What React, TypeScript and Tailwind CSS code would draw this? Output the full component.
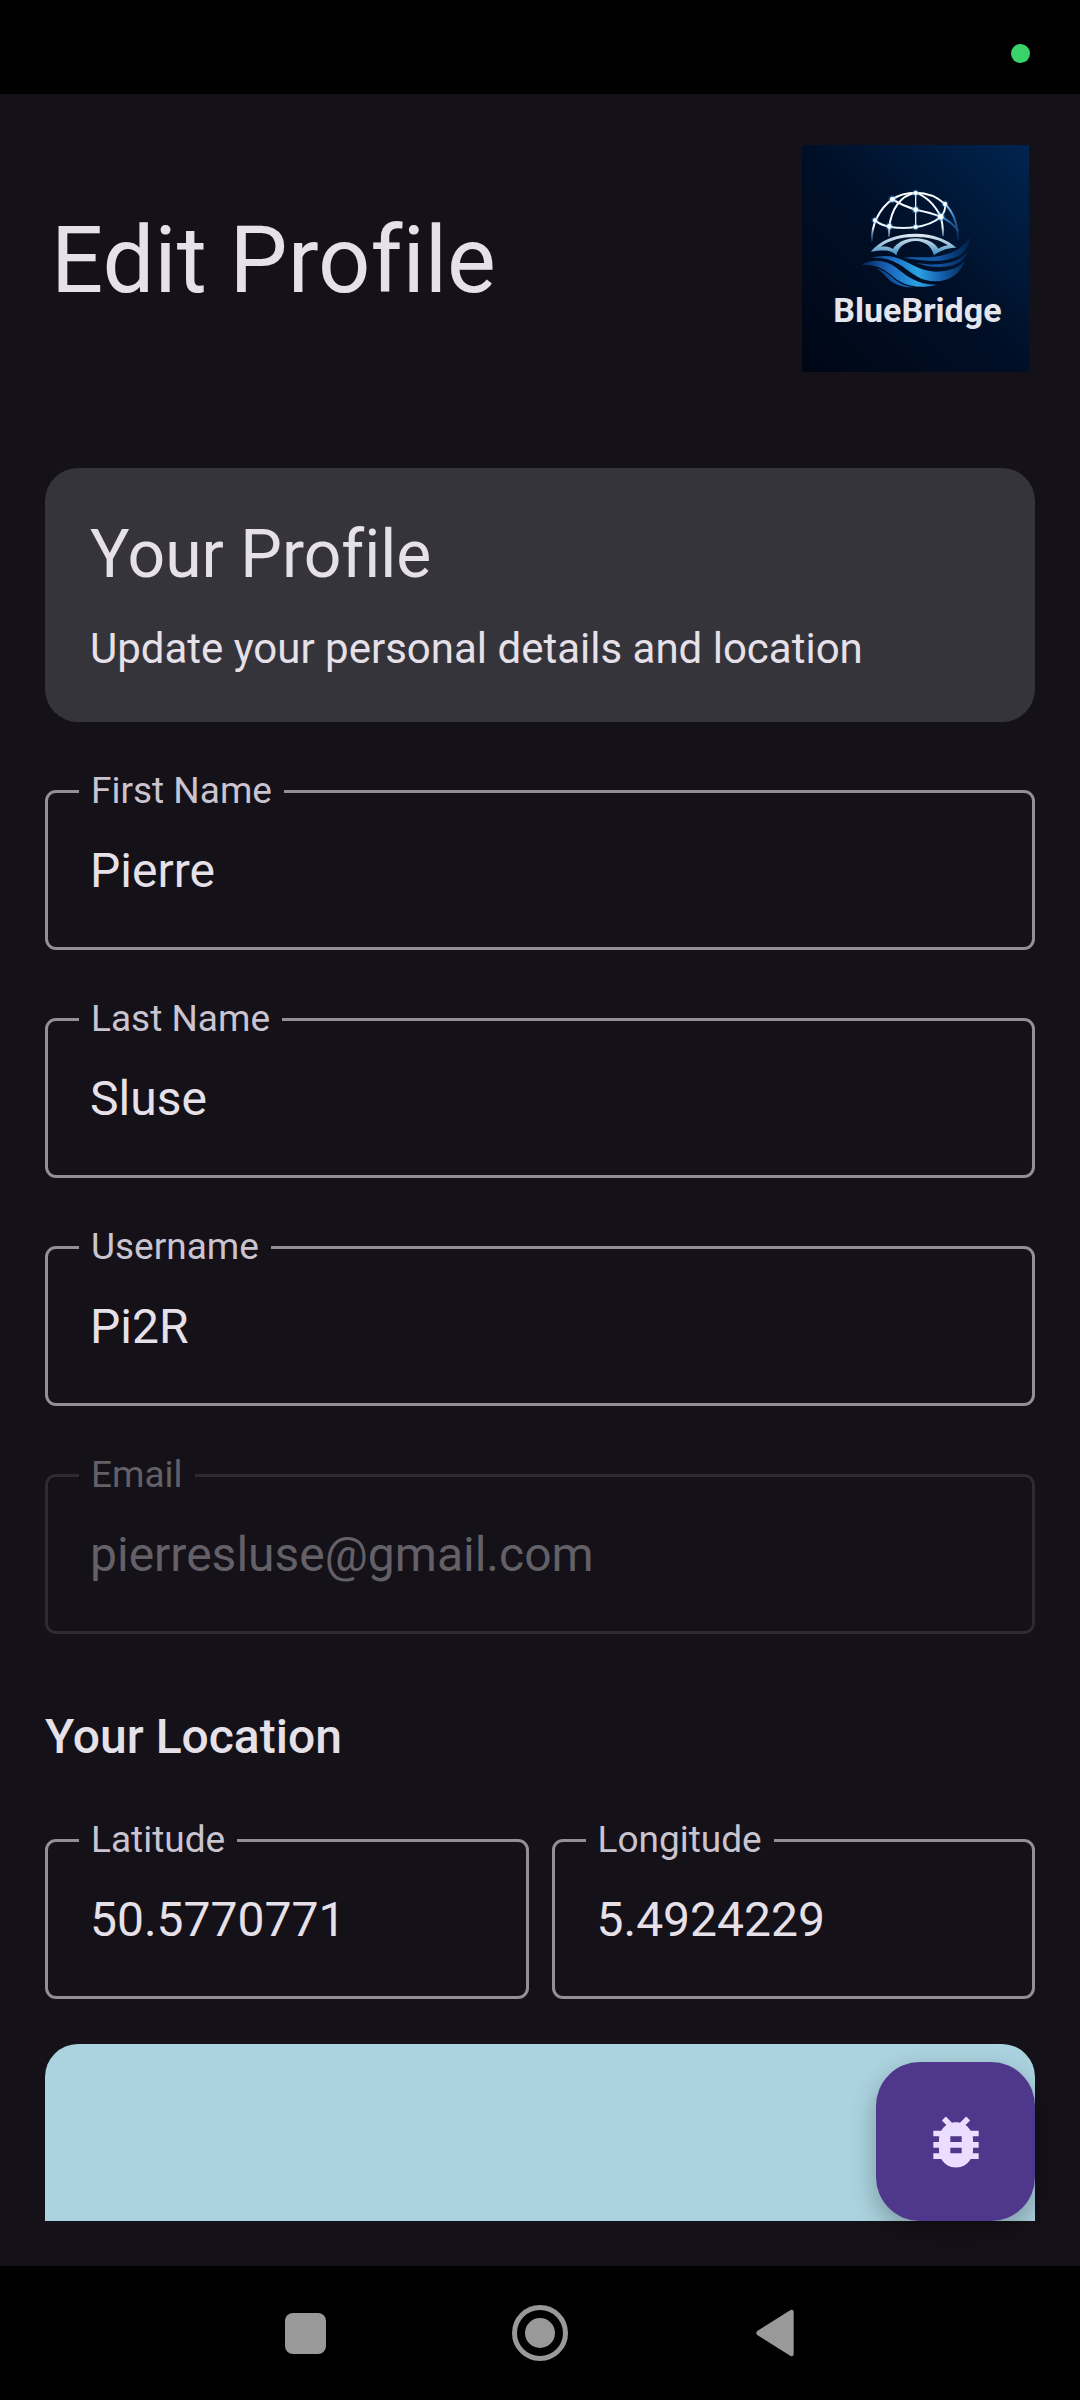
import { MdBugReport } from "react-icons/md";

type FieldProps = {
  id: string;
  label: string;
  value: string;
  type?: string;
  disabled?: boolean;
};

function Field({ id, label, value, type = "text", disabled = false }: FieldProps) {
  return (
    <div
      className={
        disabled
          ? "relative min-w-0 rounded-[11px] border-[3px] border-[#2d2b31] text-[#636067]"
          : "relative min-w-0 rounded-[11px] border-[3px] border-[#938f96] text-[#e6e0e9]"
      }
    >
      <label
        htmlFor={id}
        className={
          disabled
            ? "absolute -top-6 left-[31px] bg-[#141118] px-3 text-[37px] leading-[44px] text-[#636067]"
            : "absolute -top-6 left-[31px] bg-[#141118] px-3 text-[37px] leading-[44px] text-[#cac4d0]"
        }
      >
        {label}
      </label>
      <input
        id={id}
        type={type}
        defaultValue={value}
        disabled={disabled}
        className="block h-[154px] w-full bg-transparent px-[42px] text-[48px] outline-none"
      />
    </div>
  );
}

const stars = [
  [377, 189, 6],
  [307, 208, 7],
  [465, 222, 6],
  [377, 239, 7],
  [452, 260, 8],
  [255, 271, 6],
  [298, 289, 7],
  [377, 291, 6],
];

function Logo() {
  return (
    <svg viewBox="36 45 681 681" className="size-[227px] shrink-0" role="img" aria-label="BlueBridge">
      <defs>
        <linearGradient id="sky" x1="0" y1="1" x2="1" y2="0">
          <stop offset="0" stopColor="#000715" />
          <stop offset="0.5" stopColor="#000f27" />
          <stop offset="1" stopColor="#00244f" />
        </linearGradient>
        <linearGradient id="dome" gradientUnits="userSpaceOnUse" x1="0" y1="185" x2="0" y2="335">
          <stop offset="0" stopColor="#ffffff" />
          <stop offset="0.72" stopColor="#eef7ff" />
          <stop offset="1" stopColor="#1b5d9c" stopOpacity="0.3" />
        </linearGradient>
        <linearGradient id="east" gradientUnits="userSpaceOnUse" x1="465" y1="220" x2="505" y2="330">
          <stop offset="0" stopColor="#b9dcf3" />
          <stop offset="0.4" stopColor="#2f7fc0" />
          <stop offset="1" stopColor="#0b3566" stopOpacity="0.5" />
        </linearGradient>
        <linearGradient id="arch" gradientUnits="userSpaceOnUse" x1="0" y1="310" x2="0" y2="375">
          <stop offset="0" stopColor="#e9eef4" />
          <stop offset="0.5" stopColor="#9cc3dc" />
          <stop offset="1" stopColor="#3b8ec4" />
        </linearGradient>
        <linearGradient id="wave" gradientUnits="userSpaceOnUse" x1="215" y1="0" x2="540" y2="0">
          <stop offset="0" stopColor="#04265a" />
          <stop offset="0.28" stopColor="#1c6cc4" />
          <stop offset="0.52" stopColor="#2ba3e2" />
          <stop offset="0.75" stopColor="#145caa" />
          <stop offset="1" stopColor="#031c42" />
        </linearGradient>
        <linearGradient id="deep" gradientUnits="userSpaceOnUse" x1="215" y1="0" x2="540" y2="0">
          <stop offset="0" stopColor="#04204c" />
          <stop offset="0.35" stopColor="#1560b4" />
          <stop offset="0.7" stopColor="#1455a4" />
          <stop offset="1" stopColor="#03204a" />
        </linearGradient>
        <radialGradient id="glow">
          <stop offset="0" stopColor="#ffffff" />
          <stop offset="0.35" stopColor="#a9dcff" stopOpacity="0.8" />
          <stop offset="1" stopColor="#1e7fd6" stopOpacity="0" />
        </radialGradient>
      </defs>
      <rect x="36" y="45" width="681" height="681" fill="url(#sky)" />
      <g fill="none" stroke="url(#dome)" strokeWidth="6" strokeLinecap="round">
        <path d="M246 332C244 290 264 238 307 208C330 192 352 188 377 188C411 188 441 200 465 222" />
        <path d="M377 188C330 196 304 240 298 290L297 318" />
        <path d="M377 188C411 200 437 230 452 260C458 280 459 298 459 316" />
        <path d="M255 271C268 281 281 287 298 290C325 295 352 295 377 291C407 287 433 277 452 261C463 249 467 237 465 222" />
        <path d="M307 208C330 222 353 232 377 239C402 244 428 250 452 260" />
      </g>
      <path d="M377 188V291" stroke="#e3f1fc" strokeWidth="4" />
      <g fill="none" stroke="url(#east)" strokeWidth="6" strokeLinecap="round">
        <path d="M465 222C488 244 503 283 504 328" />
        <path d="M452 260C473 270 492 285 504 302" />
      </g>
      {stars.map(([x, y, r]) => (
        <g key={`${x}-${y}`}>
          <circle cx={x} cy={y} r={r * 2} fill="url(#glow)" />
          <circle cx={x} cy={y} r={r} fill="#ffffff" />
        </g>
      ))}
      <path
        fill="url(#arch)"
        d="M242 365C270 331 318 311 377 311C430 311 472 328 499 353C476 353 452 360 432 376C425 350 407 334 377 333C347 334 325 350 319 376C306 362 291 357 242 365Z"
      />
      <path
        fill="#02122b"
        d="M272 350C300 330 335 321 377 321C418 321 450 330 474 346C462 348 453 351 445 356C434 338 412 326 377 325C341 326 319 340 309 357C298 350 287 349 272 350Z"
      />
      <g fill="url(#deep)">
        <path d="M341 383C382 379 414 385 449 378C493 370 525 350 540 319C538 345 527 366 506 378C462 400 405 394 341 383Z" />
        <path d="M378 398C430 408 478 403 504 388C518 380 529 370 534 360C528 384 512 400 485 407C447 415 410 410 378 398Z" />
        <path d="M258 415C284 420 299 436 317 451C331 462 349 469 371 472C328 473 306 457 291 443C280 431 270 421 258 415Z" />
      </g>
      <g fill="url(#wave)">
        <path d="M240 384C277 374 309 376 339 391C377 410 410 430 455 424C491 419 513 409 525 389C514 429 481 453 437 454C392 454 369 432 340 411C309 390 277 381 240 384Z" />
        <path d="M215 404C254 385 288 391 317 412C351 440 383 465 440 464C401 475 362 472 331 455C300 438 286 404 215 404Z" />
      </g>
      <text x="130" y="575" fontFamily="Roboto, sans-serif" fontWeight="700" fontSize="102" fill="#e4e6ee">
        BlueBridge
      </text>
    </svg>
  );
}

export default function App() {
  return (
    <div className="flex min-h-screen flex-col bg-[#141118] font-[Roboto,sans-serif] text-[#e6e0e9] [font-variant-ligatures:none]">
      <div className="flex h-[94px] items-center justify-end bg-black px-[50px] pt-[13px]">
        <span className="size-[19px] rounded-full bg-[#3ad269]" />
      </div>

      <header className="flex items-center justify-between p-[51px]">
        <h1 className="pt-1 text-[92px] leading-[110px]">Edit Profile</h1>
        <Logo />
      </header>

      <main className="relative flex grow flex-col gap-[68px] p-[45px]">
        <section className="rounded-[33px] bg-[#36343b] p-[45px]">
          <h2 className="text-[66px] leading-[84px]">Your Profile</h2>
          <p className="mt-6 text-[42px] leading-[56px]">Update your personal details and location</p>
        </section>

        <Field id="first-name" label="First Name" value="Pierre" />
        <Field id="last-name" label="Last Name" value="Sluse" />
        <Field id="username" label="Username" value="Pi2R" />
        <Field id="email" label="Email" type="email" value="pierresluse@gmail.com" disabled />

        <h2 className="text-[48px] leading-[69px] font-medium">Your Location</h2>

        <div className="flex grow flex-col gap-[45px]">
          <div className="grid grid-cols-2 gap-[23px]">
            <Field id="latitude" label="Latitude" value="50.5770771" />
            <Field id="longitude" label="Longitude" value="5.4924229" />
          </div>
          <div className="min-h-[160px] grow rounded-t-[33px] bg-[#abd3df]" />
        </div>

        <button
          type="button"
          aria-label="Report a bug"
          className="absolute right-[45px] bottom-[45px] flex size-[159px] items-center justify-center rounded-[44px] bg-[#4f378b] text-[#eaddff] shadow-[0_10px_26px_rgba(0,0,0,0.28)]"
        >
          <MdBugReport className="size-[68px]" />
        </button>
      </main>

      <nav className="flex h-[134px] items-center justify-center gap-[179px] bg-black text-[#999999]">
        <button type="button" aria-label="Recent apps" className="flex size-14 items-center justify-center">
          <span className="size-[41px] rounded-[8px] bg-current" />
        </button>
        <button
          type="button"
          aria-label="Home"
          className="flex size-14 items-center justify-center rounded-full border-[5px] border-current"
        >
          <span className="size-[30px] rounded-full bg-current" />
        </button>
        <button type="button" aria-label="Back" className="flex size-14 items-center justify-center">
          <svg viewBox="0 0 38 48" className="h-12 w-[38px]" fill="currentColor" aria-hidden="true">
            <path d="M1.2 22L34.6 1Q37.5 0 37.7 3V45Q37.5 48 34.6 47L1.2 26Q-.6 24 1.2 22Z" />
          </svg>
        </button>
      </nav>
    </div>
  );
}
